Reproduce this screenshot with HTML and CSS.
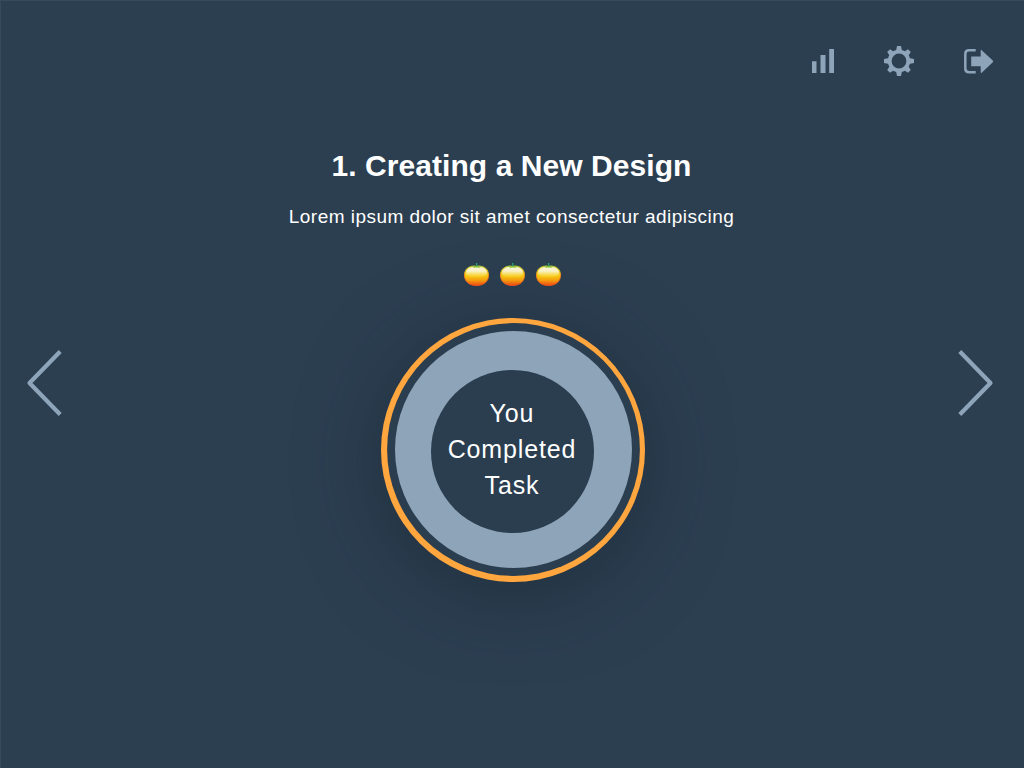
FILE: index.html
```html
<!DOCTYPE html>
<html lang="en">
<head>
<meta charset="utf-8">
<title>Task completed</title>
<link rel="stylesheet" href="styles.css">
</head>
<body>
<div class="screen">
  <header class="toolbar">
    <a class="tool" aria-label="Statistics"><svg width="22" height="24" viewBox="0 0 22 24"><path d="M0 12.2h4.5V24H0zM8.5 6H13.500V24H8.500zM17.200 0H22V24H17.200z"/></svg></a>
    <a class="tool" aria-label="Settings"><svg width="30" height="30" viewBox="-15 -15 30 30">
      <g id="teeth"><path id="tooth" d="M-2-15H2L3-10H-3z"/><use href="#tooth" transform="rotate(45) translate(0 .3)"/></g>
      <use href="#teeth" transform="rotate(90)"/><use href="#teeth" transform="rotate(180)"/><use href="#teeth" transform="rotate(270)"/>
      <circle class="gear-ring" r="9.300"/></svg></a>
    <a class="tool" aria-label="Sign out"><svg width="30" height="26" viewBox="0 -1 30 26"><path class="door" d="M11.700 1.300H5Q1.300 1.300 1.300 5V19.500Q1.300 23.200 5 23.200H11.700"/><path d="M7.200 7.400H16.700V1.400Q16.700 .2 17.700 1.200L28.800 11.500Q29.600 12.400 28.800 13.300L17.700 23.700Q16.700 24.500 16.700 23.300V17.300H7.200z"/></svg></a>
  </header>
  <main class="stage">
    <a class="arrow" aria-label="Previous"><svg width="36" height="68" viewBox="0 0 36 68"><path d="M34.200 2.500L3.500 34L34.200 65.500"/></svg></a>
    <section class="task">
      <h1 class="title">1. Creating a New Design</h1>
      <p class="subtitle">Lorem ipsum dolor sit amet consectetur adipiscing</p>
      <div class="tomatoes">
        <svg width="26" height="24" viewBox="0 0 26 24">
          <defs>
            <linearGradient id="skin" x1="0" y1="0" x2="0" y2="1"><stop offset="0" stop-color="#f9e48a"/><stop offset=".5" stop-color="#fdcf10"/><stop offset=".74" stop-color="#fda010"/><stop offset="1" stop-color="#fb4a10"/></linearGradient>
            <linearGradient id="shine" x1="0" y1="0" x2="0" y2="1"><stop offset="0" stop-color="#fffbe8"/><stop offset=".4" stop-color="#fff5c4"/><stop offset="1" stop-color="#ffe23d" stop-opacity="0"/></linearGradient>
            <linearGradient id="rim" x1="0" y1="0" x2="0" y2="1"><stop offset="0" stop-color="#9dc232"/><stop offset=".3" stop-color="#e5b51c"/><stop offset=".5" stop-color="#fb861c"/><stop offset="1" stop-color="#f9551a"/></linearGradient>
            <g id="tomato"><path fill="url(#skin)" stroke="url(#rim)" d="M12.500 3.300C5 2 .500 6.200.500 12.200C.500 18.700 5.500 22.500 12.500 22.500S24.500 18.700 24.500 12.200C24.500 6.200 20 2 12.500 3.300z"/><ellipse cx="12.500" cy="9.500" rx="10.500" ry="5.800" fill="url(#shine)"/><path fill="#9dc83d" d="M6.500 3.500Q9.500 2.300 11.700 3H13.300Q16 2.300 18.500 3.500L15 4.100L16.500 5.300L12.500 4.400L9 5.300L10.200 4.100z"/><path fill="#2e9d70" d="M11.800 0h1.600v3.400h-1.200z"/></g>
          </defs><use href="#tomato"/></svg>
        <svg width="26" height="24" viewBox="0 0 26 24"><use href="#tomato"/></svg>
        <svg width="26" height="24" viewBox="0 0 26 24"><use href="#tomato"/></svg>
      </div>
      <div class="dial">
        <svg class="rings" width="264" height="264" viewBox="0 0 264 264"><circle cx="132" cy="132" r="132" fill="#ffa63f"/><circle cx="132.500" cy="131.500" r="126.400" fill="#2b3e50"/><circle cx="132.500" cy="131.500" r="118.500" fill="#8ea4b9"/><circle cx="131.500" cy="133.500" r="81.500" fill="#2b3e50"/></svg>
        <p class="message">You<br>Completed<br>Task</p>
      </div>
    </section>
    <a class="arrow" aria-label="Next"><svg width="36" height="68" viewBox="0 0 36 68"><path d="M1.800 2.500L32.500 34L1.800 65.500"/></svg></a>
  </main>
</div>
</body>
</html>
```
FILE: styles.css
```css
* { box-sizing: border-box; }
body { margin: 0; background: #2c3f51; color: #fff; font-family: "Liberation Sans", Arial, sans-serif; }
.screen { width: 1024px; height: 768px; display: flex; flex-direction: column; overflow: hidden; border: solid #344b5e; border-width: 1px 0 0 1px; }
.toolbar { height: 121px; padding: 0 30px 2px 0; display: flex; justify-content: flex-end; gap: 50px; align-items: center; flex: none; }
.tool, .arrow, .tomatoes svg { display: block; }
.tool svg, .arrow svg { display: block; fill: #8ea4b9; }
.tool .gear-ring { fill: none; stroke: #8ea4b9; stroke-width: 3.8; }
.tool .door { fill: none; stroke: #8ea4b9; stroke-width: 2.5; }
.stage { flex: 1; display: flex; justify-content: space-between; padding: 0 30px 0 25px; }
.arrow { padding-top: 227px; }
.arrow svg { fill: none; stroke: #8ea4b9; stroke-width: 4.2; stroke-linejoin: round; stroke-linecap: butt; }
.task { display: flex; flex-direction: column; align-items: center; padding: 26px 0 0 3px; }
.title { margin: 0; font-size: 30px; line-height: 36px; letter-spacing: .06px; white-space: nowrap; }
.subtitle { margin: 21px 0 0; font-size: 19px; line-height: 24px; letter-spacing: .47px; white-space: nowrap; }
.tomatoes { display: flex; gap: 10px; margin: 34px 0 0 3px; }
.dial { display: grid; place-items: center; width: 264px; height: 264px; margin: 31px 0 0 4px; border-radius: 50%; box-shadow: 0 12px 80px rgba(20, 32, 43, .5); }
.rings, .message { grid-area: 1 / 1; }
.message { margin: 0; padding: 0 3px 2px 0; font-size: 25px; line-height: 36px; letter-spacing: .85px; text-align: center; z-index: 1; }
```
